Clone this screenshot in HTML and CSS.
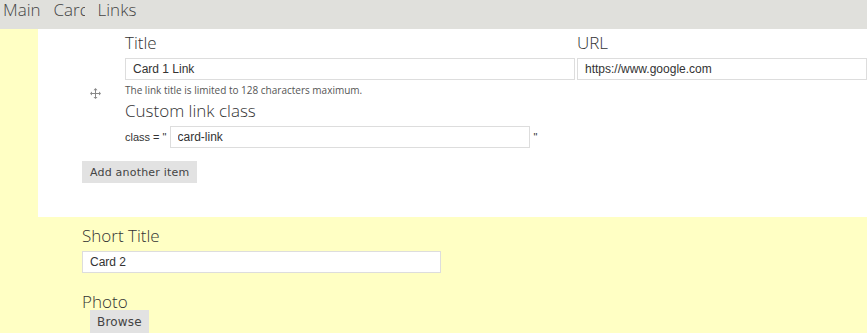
FILE: index.html
```html
<!DOCTYPE html>
<html lang="en">
<head>
    <meta charset="UTF-8">
    <title>Card edit</title>
    <link rel="stylesheet" href="styles.css">
</head>
<body>
    <div class="tabs">
        <div class="tab">Main</div>
        <div class="tab tab-clipped">Card</div>
        <div class="tab">Links</div>
    </div>

    <div class="panel">
        <div class="item">
            <div class="handle">
                <svg width="11" height="11" viewBox="0 0 11 11">
                    <path d="M5.5 0 L7.5 2.2 H6 V5 H9 V3.5 L11 5.5 L9 7.5 V6 H6 V9 H7.5 L5.5 11 L3.5 9 H5 V6 H2 V7.5 L0 5.5 L2 3.5 V5 H5 V2.2 H3.5 Z" fill="#888"/>
                </svg>
            </div>
            <div class="fields">
                <div class="row">
                    <div class="field field-title">
                        <label class="label">Title</label>
                        <input class="text" type="text" value="Card 1 Link">
                    </div>
                    <div class="field field-url">
                        <label class="label">URL</label>
                        <input class="text" type="text" value="https://www.google.com">
                    </div>
                </div>
                <div class="help">The link title is limited to 128 characters maximum.</div>
                <label class="label">Custom link class</label>
                <div class="class-row">
                    <span>class = "</span>
                    <input class="text class-input" type="text" value="card-link">
                    <span>"</span>
                </div>
            </div>
        </div>
        <button class="btn">Add another item</button>
    </div>

    <div class="content">
        <label class="label">Short Title</label>
        <input class="text short-input" type="text" value="Card 2">

        <label class="label photo-label">Photo</label>
        <button class="btn browse">Browse</button>
    </div>
</body>
</html>
```

FILE: styles.css
```css
html, body {
    overflow: hidden;
}

body {
    margin: 0;
    background-color: #ffffc4;
    font-family: "Open Sans", sans-serif;
    color: #333;
}

.tabs {
    display: flex;
    height: 29px;
    background-color: #e0e0dc;
    padding-left: 3px;
    gap: 13px;
    font-size: 17px;
    font-weight: 300;
    line-height: 19px;
    color: #444;
}

.tab-clipped {
    width: 31px;
    overflow: hidden;
    white-space: nowrap;
}

.panel {
    margin-left: 38px;
    height: 188px;
    background-color: #fff;
    box-sizing: border-box;
    padding-left: 44px;
}

.item {
    display: flex;
}

.handle {
    width: 43px;
    padding-top: 53px;
    padding-left: 8px;
    box-sizing: border-box;
}

.fields {
    flex: 1;
}

.row {
    display: flex;
    gap: 2px;
}

.field-title {
    width: 450px;
}

.field-url {
    flex: 1;
}

.label {
    display: block;
    font-size: 17px;
    font-weight: 300;
    line-height: 22px;
    color: #333;
    padding-top: 3px;
    margin-bottom: 4px;
}

.text {
    display: block;
    box-sizing: border-box;
    width: 100%;
    height: 22px;
    margin: 0;
    border: 1px solid #ddd;
    padding: 0 7px;
    font-family: "Liberation Sans", Arial, sans-serif;
    font-size: 12px;
    color: #333;
    background: #fff;
    outline: none;
}

.help {
    font-size: 10px;
    color: #555;
    margin-top: 3px;
    line-height: 14px;
}

.class-row {
    display: flex;
    align-items: center;
    gap: 3px;
    font-family: "Liberation Sans", Arial, sans-serif;
    font-size: 11px;
    color: #333;
    margin-top: 1px;
}

.class-input {
    width: 360px;
    margin-right: 1px;
}

.btn {
    display: block;
    margin-top: 13px;
    height: 22px;
    padding: 0 8px;
    border: none;
    background-color: #e2e2e2;
    font-family: "DejaVu Sans", Verdana, sans-serif;
    font-size: 11px;
    color: #444;
    letter-spacing: 0.2px;
}

.content {
    padding-left: 82px;
}

.content .label {
    padding-top: 8px;
}

.short-input {
    width: 359px;
}

.photo-label {
    margin-top: 10px;
    margin-bottom: -3px;
}

.browse {
    margin-top: 0;
    margin-left: 8px;
    height: 24px;
    padding: 0 7px;
    font-size: 12px;
}
```
